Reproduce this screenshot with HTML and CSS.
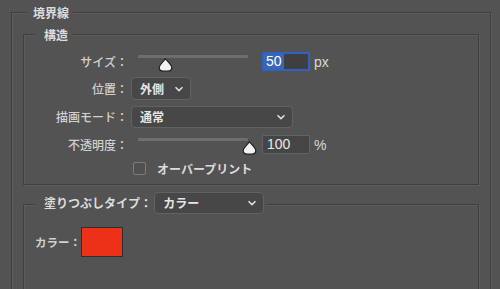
FILE: index.html
```html
<!DOCTYPE html>
<html lang="ja">
<head>
<meta charset="utf-8">
<link rel="stylesheet" href="styles.css">
</head>
<body>
<div class="panel">
  <section class="group outer">
    <div class="group-title title-outer">境界線</div>
    <section class="group inner structure">
      <div class="group-title title-inner">構造</div>
      <div class="form">
        <label class="lbl">サイズ：</label>
        <div class="ctrl">
          <div class="slider">
            <div class="track"></div>
            <svg class="thumb" style="left:20px" width="15" height="14" viewBox="0 0 15 14"><path d="M7.5 0.8 C9 2.6 13.8 7 13.8 9.6 C13.8 12 12.1 13.2 9.7 13.2 L5.3 13.2 C2.9 13.2 1.2 12 1.2 9.6 C1.2 7 6 2.6 7.5 0.8 Z" fill="#f2f2f2" stroke="#1e1e1e" stroke-width="1.2"/></svg>
          </div>
          <div class="num focus"><span class="sel">50</span></div>
          <span class="unit">px</span>
        </div>

        <label class="lbl">位置：</label>
        <div class="ctrl">
          <div class="select w-pos"><span>外側</span><svg class="chev" width="10" height="6" viewBox="0 0 10 6"><path d="M1.5 1.2 L5 4.6 L8.5 1.2" fill="none" stroke="#e0e0e0" stroke-width="1.5"/></svg></div>
        </div>

        <label class="lbl">描画モード：</label>
        <div class="ctrl">
          <div class="select w-mode"><span>通常</span><svg class="chev" width="10" height="6" viewBox="0 0 10 6"><path d="M1.5 1.2 L5 4.6 L8.5 1.2" fill="none" stroke="#e0e0e0" stroke-width="1.5"/></svg></div>
        </div>

        <label class="lbl">不透明度：</label>
        <div class="ctrl">
          <div class="slider">
            <div class="track"></div>
            <svg class="thumb" style="left:104px" width="15" height="14" viewBox="0 0 15 14"><path d="M7.5 0.8 C9 2.6 13.8 7 13.8 9.6 C13.8 12 12.1 13.2 9.7 13.2 L5.3 13.2 C2.9 13.2 1.2 12 1.2 9.6 C1.2 7 6 2.6 7.5 0.8 Z" fill="#f2f2f2" stroke="#1e1e1e" stroke-width="1.2"/></svg>
          </div>
          <div class="num"><span>100</span></div>
          <span class="unit">%</span>
        </div>

        <span></span>
        <div class="ctrl check-row">
          <span class="checkbox"></span>
          <span class="check-label">オーバープリント</span>
        </div>
      </div>
    </section>

    <section class="group inner fill">
      <div class="group-title title-fill">
        <span class="fill-label">塗りつぶしタイプ：</span>
        <div class="select w-fill"><span>カラー</span><svg class="chev" width="10" height="6" viewBox="0 0 10 6"><path d="M1.5 1.2 L5 4.6 L8.5 1.2" fill="none" stroke="#e0e0e0" stroke-width="1.5"/></svg></div>
      </div>
      <div class="color-row">
        <span class="lbl color-lbl">カラー：</span>
        <span class="swatch"></span>
      </div>
    </section>
  </section>
</div>
</body>
</html>
```

FILE: styles.css
```css
html, body {
  margin: 0;
  padding: 0;
  background: #535353;
  overflow: hidden;
}
body {
  width: 500px;
  height: 289px;
  font-family: "Noto Sans CJK JP", "Noto Sans", sans-serif;
  font-size: 12px;
  color: #d6d6d6;
}
.panel {
  padding: 12px 9px 0 11px;
}
.group {
  position: relative;
  border: 1px solid #3f3f3f;
  box-shadow: inset 1px 1px 0 #5d5d5d, 1px 1px 0 #5d5d5d;
}
.outer {
  box-sizing: border-box;
  height: 290px;
  padding: 21px 11px 0 11px;
}
.group-title {
  position: absolute;
  background: #535353;
  line-height: 17px;
  font-weight: 700;
  color: #dcdcdc;
}
.title-outer {
  top: -9px;
  left: 15px;
  padding: 0 4px 0 6px;
}
.title-inner {
  top: -9px;
  left: 11px;
  padding: 0 5px 0 9px;
}
.structure {
  height: 151px;
  box-sizing: border-box;
  padding: 13px 0 0 0;
}
.form {
  display: grid;
  grid-template-columns: 104px 1fr;
  grid-template-rows: 27px 27px 29px 27px 21px;
  column-gap: 3px;
  align-items: center;
}
.lbl {
  text-align: right;
  color: #d0d0d0;
  font-weight: 500;
  white-space: nowrap;
}
.ctrl {
  display: flex;
  align-items: center;
}
.slider {
  position: relative;
  width: 110px;
  height: 20px;
  margin-left: 7px;
}
.track {
  position: absolute;
  left: 0;
  right: 0;
  top: 3px;
  height: 3px;
  background: #6e6e6e;
  border-radius: 1px;
}
.thumb {
  position: absolute;
  top: 6px;
  display: block;
}
.num {
  box-sizing: border-box;
  width: 48px;
  height: 19px;
  margin-left: 14px;
  border: 1px solid #636363;
  background: #454545;
  border-radius: 1px;
  font-size: 14px;
  line-height: 17px;
  color: #e8e8e8;
  padding-left: 4px;
  font-family: "Liberation Sans", "Noto Sans", sans-serif;
  display: flex;
  align-items: center;
}
.num.focus {
  border: 2px solid #2f62c4;
  background: #3f3f3f;
  padding-left: 0;
}
.sel {
  background: #3966b5;
  color: #ffffff;
  padding: 0 2px 0 2px;
  line-height: 15px;
}
.unit {
  margin-left: 4px;
  font-size: 14px;
  color: #d8d8d8;
  font-family: "Liberation Sans", "Noto Sans", sans-serif;
}
.select {
  box-sizing: border-box;
  height: 23px;
  border: 1px solid #626262;
  border-radius: 4px;
  background: #474747;
  display: flex;
  align-items: center;
  justify-content: space-between;
  padding: 0 6px 0 8px;
  font-weight: 700;
  color: #e6e6e6;
}
.chev {
  display: block;
}
.w-pos {
  width: 60px;
}
.w-mode {
  width: 162px;
  height: 22px;
}
.check-row {
  padding-left: 2px;
}
.checkbox {
  box-sizing: border-box;
  width: 13px;
  height: 13px;
  border: 1px solid #7c7c7c;
  border-radius: 2px;
  background: #505050;
}
.check-label {
  margin-left: 11px;
  font-weight: 700;
  color: #dcdcdc;
}
.fill {
  margin-top: 19px;
  height: 95px;
}
.title-fill {
  top: -13px;
  left: 11px;
  padding: 0 3px 0 9px;
  display: flex;
  align-items: center;
  line-height: 22px;
}
.fill-label {
  color: #dcdcdc;
}
.w-fill {
  width: 110px;
  height: 22px;
  margin-left: 2px;
}
.color-row {
  display: flex;
  align-items: center;
  padding: 22px 0 0 11px;
}
.color-lbl {
  font-weight: 700;
  font-size: 11.5px;
}
.swatch {
  box-sizing: border-box;
  width: 42px;
  height: 30px;
  background: #ec3118;
  border: 1px solid #2e2e2e;
}
```
